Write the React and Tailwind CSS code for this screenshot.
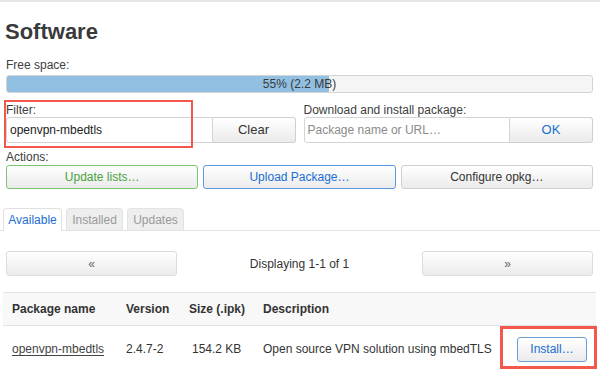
import React from "react";

const btn =
  "flex items-center justify-center rounded-[3px] border bg-linear-to-b from-white to-[#ebebeb] text-[12px]";

export default function App() {
  return (
    <div
      className="relative w-[600px] h-[378px] overflow-hidden bg-white text-[#404040]"
      style={{ fontFamily: '"Liberation Sans", Arial, sans-serif' }}
    >
      <div className="h-[2px] bg-[#e6e6e6]" />
      <div className="px-[6px] pr-[7px] flex flex-col">
        <h1 className="mt-[17px] h-[25px] leading-[25px] text-[22px] font-bold text-[#3a3a3a] -ml-[1px]">
          Software
        </h1>
        <div className="mt-[14px] h-[14px] leading-[14px] text-[12px]">Free space:</div>
        <div className="mt-[3px] relative h-[18px] rounded-[3px] border border-[#d4d4d4] bg-[#f5f5f5] overflow-hidden">
          <div className="absolute left-0 top-0 bottom-0 w-[55%] bg-[#91c0e2]" />
          <div className="relative flex h-full items-center justify-center text-[12px] text-[#3a3a3a]">
            55% (2.2 MB)
          </div>
        </div>

        <div className="mt-[10px] grid grid-cols-2 gap-[8px]">
          <div>
            <div className="h-[14px] leading-[14px] text-[12px]">Filter:</div>
            <div className="flex h-[26px]">
              <div className="flex-1 flex items-center rounded-l-[3px] border border-[#d4d4d4] bg-white px-[3px] text-[12px] text-[#222]">
                openvpn-mbedtls
              </div>
              <div className={`${btn} w-[83px] rounded-l-none border-[#cfcfcf] border-l-0 text-[13px] text-[#333]`}>
                Clear
              </div>
            </div>
          </div>
          <div>
            <div className="h-[14px] leading-[14px] text-[12px]">Download and install package:</div>
            <div className="flex h-[26px]">
              <div className="flex-1 flex items-center rounded-l-[3px] border border-[#d4d4d4] bg-white px-[3px] text-[12px] text-[#8a8a8a]">
                Package name or URL…
              </div>
              <div className={`${btn} w-[83px] rounded-l-none border-[#cfcfcf] border-l-0 text-[13px] text-[#1a6fd1]`}>
                OK
              </div>
            </div>
          </div>
        </div>

        <div className="mt-[7px] h-[14px] leading-[14px] text-[12px]">Actions:</div>
        <div className="mt-[1px] grid grid-cols-3 gap-[5px] h-[24px]">
          <div className={`${btn} border-[#7cc46f] text-[#4aa23c]`}>Update lists…</div>
          <div className={`${btn} border-[#5a9be0] text-[#1a6fd1]`}>Upload Package…</div>
          <div className={`${btn} border-[#cfcfcf] text-[#333]`}>Configure opkg…</div>
        </div>
      </div>

      <div className="mt-[19px] h-[23px] border-b border-[#e3e3e3] flex items-end gap-[4px] pl-[3px]">
        <div className="h-[23px] w-[59px] -mb-px rounded-t-[4px] border border-b-0 border-[#e0e0e0] bg-white flex items-center justify-center text-[12px] text-[#1a6fd1]">
          Available
        </div>
        <div className="h-[22px] w-[57px] rounded-t-[4px] border border-b-0 border-[#e3e3e3] bg-[#eeeeee] flex items-center justify-center text-[12px] text-[#9a9a9a]">
          Installed
        </div>
        <div className="h-[22px] w-[57px] rounded-t-[4px] border border-b-0 border-[#e3e3e3] bg-[#eeeeee] flex items-center justify-center text-[12px] text-[#9a9a9a]">
          Updates
        </div>
      </div>

      <div className="mt-[20px] px-[6px] pr-[7px] h-[25px] flex items-center justify-between">
        <div className={`${btn} w-[171px] h-[25px] border-[#dcdcdc] text-[8px] text-[#666]`}>«</div>
        <div className="text-[12px] text-[#333]">Displaying 1-1 of 1</div>
        <div className={`${btn} w-[171px] h-[25px] border-[#dcdcdc] text-[8px] text-[#666]`}>»</div>
      </div>

      <div className="mt-[16px] ml-[3px] w-[593px]">
        <div className="flex h-[34px] items-center bg-[#f8f8f8] border-t border-b border-[#e3e3e3] text-[12px] font-bold text-[#333]">
          <div className="w-[114px] pl-[9px]">Package name</div>
          <div className="w-[63px] pl-[9px]">Version</div>
          <div className="w-[74px] pl-[9px]">Size (.ipk)</div>
          <div className="flex-1 pl-[9px]">Description</div>
        </div>
        <div className="flex h-[46px] items-center text-[12px] text-[#333]">
          <div className="w-[114px] pl-[9px] underline underline-offset-2 text-[#444]">openvpn-mbedtls</div>
          <div className="w-[63px] pl-[9px]">2.4.7-2</div>
          <div className="w-[74px] pl-[12px]">154.2 KB</div>
          <div className="w-[246px] pl-[9px]">Open source VPN solution using mbedTLS</div>
          <div className="flex-1 flex pl-[17px]">
            <div className={`${btn} w-[70px] h-[25px] border-[#6a9fd8] text-[#1a6fd1]`}>Install…</div>
          </div>
        </div>
      </div>

      <div className="absolute left-[4px] top-[100px] w-[189px] h-[48px] border-2 border-[#f2594c] pointer-events-none" />
      <div className="absolute left-[500px] top-[326px] w-[97px] h-[43px] border-[3px] border-[#f2594c] pointer-events-none" />
    </div>
  );
}
